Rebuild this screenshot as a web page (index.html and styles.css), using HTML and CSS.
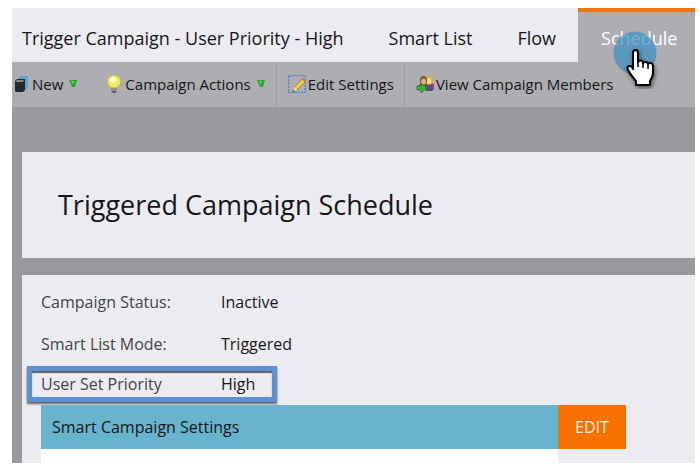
FILE: index.html
```
<!DOCTYPE html>
<html lang="en">
<head>
<meta charset="utf-8">
<title>Trigger Campaign - User Priority - High</title>
<link rel="stylesheet" href="styles.css">
</head>
<body>
<div class="app">
  <nav class="tabs">
    <a class="tab tab-title" href="#campaign">Trigger Campaign - User Priority - High</a>
    <a class="tab" href="#smart-list">Smart List</a>
    <a class="tab" href="#flow">Flow</a>
    <a class="tab tab-active" href="#schedule">Schedule
      <svg class="pointer" viewBox="0 0 52 58" aria-hidden="true">
        <circle cx="22" cy="22" r="21.500" fill="#3d8fc0" fill-opacity=".72"/>
        <path class="hand" d="M20 22c0-4 5-4 5 0v9c1-2 5-2 5 1 1-2 5-1 5 1 1-2 5-1 5 2v7c0 4-2 6-3 8v4H23v-4c-3-4-6-7-8-11-2-4 2-5 4-3l1 2z" fill="#fff" stroke="#000" stroke-width="2" stroke-linejoin="round"/>
        <path d="M25 30v6M30 32v5M35 33v5" stroke="#000" stroke-width="1.500" fill="none"/>
      </svg>
    </a>
  </nav>
  <div class="toolbar">
    <button class="tool tool-new" type="button">
      <svg class="icon icon-small" viewBox="0 0 14 18" aria-hidden="true">
        <path d="M5 2l1-1h7l1 1v11l-3 3V4H4z" fill="#5aa5d0"/>
        <path d="M1 6l2-2h8v11l-2 2H2l-1-1z" fill="#25282b"/>
        <path d="M2 6l1-1h7L9 7H2z" fill="#85888b"/>
      </svg>
      New
      <svg class="arrow" viewBox="0 0 8 8" aria-hidden="true"><path d="M0 0h8L6 7H3z" fill="#2ba52e"/><path d="M2 1h3L4 4z" fill="#7bd477"/></svg>
    </button>
    <button class="tool tool-actions" type="button">
      <svg class="icon icon-small" viewBox="0 0 14 18" aria-hidden="true">
        <path d="M4 11h6v5l-2 2H6l-2-2z" fill="#5d5c52"/>
        <path d="M4 13h6M4 15h6" stroke="#c8c7be"/>
        <path d="M7 .5C3 .5 .5 3 .5 6.500c0 3 2.500 4 3 6h7c.5-2 3-3 3-6C13.500 3 11 .5 7 .5z" fill="#f2e95b" stroke="#c9bd3e" stroke-width=".6"/>
        <ellipse cx="6" cy="5" rx="3" ry="3" fill="#fffcc9"/>
      </svg>
      Campaign Actions
      <svg class="arrow" viewBox="0 0 8 8" aria-hidden="true"><path d="M0 0h8L6 7H3z" fill="#2ba52e"/><path d="M2 1h3L4 4z" fill="#7bd477"/></svg>
    </button>
    <button class="tool tool-edit" type="button">
      <svg class="icon" viewBox="0 0 18 18" aria-hidden="true">
        <rect x=".7" y=".7" width="16.600" height="16.600" fill="none" stroke="#3f86c0" stroke-width="1.300" stroke-dasharray="2 1.200"/>
        <path d="M5 17l1.500-5L14 4l3 3-8 8z" fill="#f1c84a" stroke="#95712b" stroke-width=".7"/>
        <path d="M14 4l1-1c1-1 3.500 1 2.500 2.500L17 7z" fill="#d9746b"/>
        <path d="M5 17l1.500-5L9 15z" fill="#efe0c0"/><path d="M5 17l.7-2L7 16z" fill="#222"/>
      </svg>
      Edit Settings
    </button>
    <button class="tool tool-members" type="button">
      <svg class="icon" viewBox="0 0 18 18" aria-hidden="true">
        <path d="M10 9c3-2 8-1 8 5l-2 2h-6z" fill="#2f559a"/><path d="M15 8l3 1v5h-2z" fill="#bb3c31"/>
        <ellipse cx="13" cy="5" rx="4" ry="4.800" fill="#dfae45"/><ellipse cx="13" cy="6" rx="2.300" ry="3" fill="#f4d6a2"/>
        <path d="M1 15c0-5 3-6 6-6 4 0 6 3 6 6z" fill="#b0362d"/>
        <ellipse cx="7.500" cy="5.500" rx="3.500" ry="4.500" fill="#80532c"/><ellipse cx="7.500" cy="6.500" rx="2.300" ry="3" fill="#e6b378"/>
        <path d="M1 11h4V8l6 5-6 5v-3H1z" fill="#37b53c" stroke="#1c7d25" stroke-width=".8"/>
      </svg>
      View Campaign Members
    </button>
  </div>
  <main class="content">
    <header class="panel heading"><h1>Triggered Campaign Schedule</h1></header>
    <section class="panel details">
      <dl class="fields">
        <div class="field"><dt>Campaign Status:</dt><dd>Inactive</dd></div>
        <div class="field"><dt>Smart List Mode:</dt><dd>Triggered</dd></div>
        <div class="field field-marked"><dt>User Set Priority</dt><dd>High</dd></div>
      </dl>
      <div class="settings">
        <div class="settings-card">
          <h2>Smart Campaign Settings</h2>
        </div>
        <button class="edit" type="button">EDIT</button>
      </div>
    </section>
  </main>
</div>
</body>
</html>
```
FILE: styles.css
```
* { box-sizing: border-box; }

body {
  margin: 8px 5px 3px 12px;
  background: #fff;
  color: #161618;
  font-family: "Open Sans", "Noto Sans", sans-serif;
  font-size: 16px;
  line-height: 20px;
}

h1, h2, dl, dd { margin: 0; font-weight: 400; }

button {
  border: 0;
  padding: 0;
  background: none;
  color: inherit;
  font: inherit;
  cursor: pointer;
}

.tabs {
  display: flex;
  background: #ecebf1;
}

.tab {
  padding: 18px 22px 12px 23px;
  color: inherit;
  font-size: 18px;
  line-height: 24px;
  text-decoration: none;
  white-space: nowrap;
}

.tab-title { padding-left: 10px; }

.tab-active {
  position: relative;
  flex: 1;
  padding-top: 14px;
  border-top: 4px solid #f57400;
  background: #aeadb2;
  color: #fff;
}

.pointer {
  position: absolute;
  top: 19px;
  left: 35px;
  z-index: 1;
  width: 52px;
  height: 58px;
}

.hand { filter: drop-shadow(1px 2px 2px #0008); }

.toolbar {
  display: flex;
  height: 45px;
  background: #aeadb2;
}

.tool {
  display: flex;
  align-items: center;
  padding-bottom: 2px;
  font-size: 15px;
  white-space: nowrap;
}

.icon { width: 18px; height: 18px; margin-right: 2px; }
.icon-small { width: 14px; margin-right: 4px; }
.arrow { width: 8px; height: 8px; margin-left: 6px; }

.tool-new { padding-left: 2px; padding-right: 30px; }
.tool-actions { padding-right: 11px; }

.tool-edit,
.tool-members {
  padding-left: 11px;
  padding-right: 10px;
  border-left: 1px solid #9f9ea3;
}

.content {
  display: grid;
  gap: 17px;
  padding: 45px 0 0 10px;
  background: #99989d;
}

.panel { background: #ecebf1; }

.heading { padding: 36px; }

h1 { font-size: 27px; line-height: 34px; }

.details { padding: 6px 69px 0 19px; }

.field {
  display: flex;
  align-items: center;
  height: 42px;
}

.field dt { width: 180px; color: #434347; }

.field-marked {
  width: 250px;
  height: 36px;
  margin: 1px 0 3px -14px;
  padding-left: 9px;
  border: 5px solid #5f90d4;
  box-shadow: 0 2px 2px #0009, inset 0 2px 1px #0009;
}

.settings { display: flex; align-items: flex-start; }

.settings-card {
  flex: 1;
  padding-bottom: 14px;
  background: #fff;
}

h2 {
  padding: 12px 11px;
  background: #68b4cf;
  font-size: 16px;
  line-height: 20px;
}

.edit {
  width: 68px;
  height: 44px;
  background: #f57200;
  color: #f8efe6;
}
```
